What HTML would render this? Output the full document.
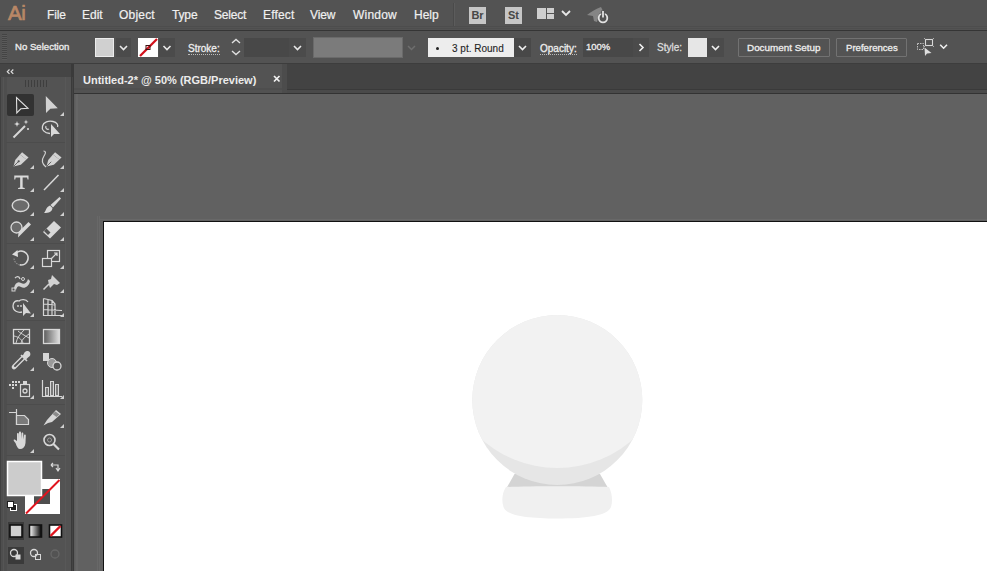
<!DOCTYPE html>
<html><head><meta charset="utf-8">
<style>
*{margin:0;padding:0;box-sizing:border-box}
html,body{width:987px;height:571px;overflow:hidden;background:#535353;font-family:"Liberation Sans",sans-serif;color:#f0f0f0}
.a{position:absolute}
.mi{position:absolute;top:8px;font-size:12px;line-height:14px;color:#f0f0f0;white-space:nowrap;-webkit-text-stroke:0.2px #f0f0f0}
.lbl{position:absolute;font-size:10px;line-height:12px;color:#eeeeee;white-space:nowrap;-webkit-text-stroke:0.3px currentColor}
svg{position:absolute;overflow:visible}
</style></head><body>
<!-- MENU BAR -->
<div class="a" style="left:0;top:0;width:987px;height:30px;background:#535353">
  <div class="a" style="left:8px;top:2px;font-size:20.5px;line-height:22px;color:#b98766;letter-spacing:-0.3px;-webkit-text-stroke:0.7px #b98766">Ai</div>
  <div class="mi" style="left:47px;letter-spacing:-0.15px">File</div>
  <div class="mi" style="left:82px;letter-spacing:0px">Edit</div>
  <div class="mi" style="left:119px;letter-spacing:0.2px">Object</div>
  <div class="mi" style="left:172px;letter-spacing:-0.15px">Type</div>
  <div class="mi" style="left:214px;letter-spacing:-0.2px">Select</div>
  <div class="mi" style="left:263px;letter-spacing:0.15px">Effect</div>
  <div class="mi" style="left:310px;letter-spacing:-0.15px">View</div>
  <div class="mi" style="left:353px;letter-spacing:0.2px">Window</div>
  <div class="mi" style="left:414px;letter-spacing:0px">Help</div>
  <div class="a" style="left:453px;top:3px;width:1px;height:23px;background:#4a4a4a"></div><div class="a" style="left:454px;top:3px;width:1px;height:23px;background:#5c5c5c"></div>
  <div class="a" style="left:469px;top:7px;width:17px;height:17px;background:#c6c6c6;color:#474747;font-size:11px;line-height:17px;text-align:center;font-weight:bold;-webkit-text-stroke:0">Br</div>
  <div class="a" style="left:505px;top:7px;width:17px;height:17px;background:#c6c6c6;color:#474747;font-size:11px;line-height:17px;text-align:center;font-weight:bold">St</div>
  <svg style="left:537px;top:8px" width="40" height="16">
    <rect x="0" y="0" width="9" height="11" fill="#cfcfcf"/>
    <rect x="10" y="0" width="7" height="5" fill="#cfcfcf"/>
    <rect x="10" y="6" width="7" height="5" fill="#cfcfcf"/>
    <path d="M25 3 L29 7 L33 3" stroke="#e8e8e8" stroke-width="1.8" fill="none"/>
  </svg>
  <svg style="left:585px;top:5px" width="26" height="20">
    <path d="M2 10 C6 7 10 4 16 2 L18 6 L14 9 L12 17 L9 16 L8 11 Z" fill="#858585"/>
    <circle cx="18" cy="13" r="4.3" stroke="#e2e2e2" stroke-width="1.8" fill="none"/>
    <rect x="16.2" y="5.5" width="3.6" height="7" fill="#535353"/>
    <rect x="17.1" y="6" width="1.8" height="6.5" fill="#e2e2e2"/>
  </svg>
</div>
<div class="a" style="left:0;top:26px;width:987px;height:1px;background:#4d4d4d"></div><div class="a" style="left:0;top:28px;width:987px;height:1px;background:#4e4e4e"></div><div class="a" style="left:0;top:30px;width:987px;height:1px;background:#353535"></div>
<!-- CONTROL BAR -->
<div class="a" style="left:0;top:31px;width:987px;height:32px;background:#535353">
  <div class="a" style="left:2px;top:3px;width:5px;height:26px;background:repeating-linear-gradient(#444 0 1px,#5a5a5a 1px 2px)"></div>
  <div class="lbl" style="left:15px;top:10px;font-size:9.6px;letter-spacing:0px">No Selection</div>
  <div class="a" style="left:95px;top:7px;width:19px;height:19px;background:#d0d0d0;border:1px solid #ececec"></div>
  <div class="a" style="left:116px;top:7px;width:15px;height:19px;background:#4b4b4b"></div>
  <svg style="left:116px;top:7px" width="15" height="19"><path d="M4 8 L7.5 11.5 L11 8" stroke="#e8e8e8" stroke-width="1.6" fill="none"/></svg>
  <svg style="left:138px;top:7px" width="20" height="19">
    <rect x="0" y="0" width="20" height="19" fill="#fff"/>
    <line x1="2" y1="18" x2="19" y2="1" stroke="#d3121c" stroke-width="2.3"/>
    <rect x="8" y="7.5" width="4" height="4" fill="none" stroke="#3a1010" stroke-width="1"/>
  </svg>
  <div class="a" style="left:159px;top:7px;width:16px;height:19px;background:#4b4b4b"></div>
  <svg style="left:159px;top:7px" width="16" height="19"><path d="M4.5 8 L8 11.5 L11.5 8" stroke="#e8e8e8" stroke-width="1.6" fill="none"/></svg>
  <div class="lbl" style="left:188px;top:12px;border-bottom:1px dotted #bbb;line-height:11px">Stroke:</div>
  <svg style="left:229px;top:6px" width="14" height="20">
    <path d="M3 6 L7 2.5 L11 6" stroke="#e0e0e0" stroke-width="1.4" fill="none"/>
    <path d="M3 14 L7 17.5 L11 14" stroke="#e0e0e0" stroke-width="1.4" fill="none"/>
  </svg>
  <div class="a" style="left:244px;top:7px;width:45px;height:19px;background:#484848"></div>
  <div class="a" style="left:289px;top:7px;width:17px;height:19px;background:#4b4b4b"></div>
  <svg style="left:289px;top:7px" width="17" height="19"><path d="M5 8 L8.5 11.5 L12 8" stroke="#e8e8e8" stroke-width="1.6" fill="none"/></svg>
  <div class="a" style="left:313px;top:6px;width:90px;height:21px;background:#7b7b7b;border:1px solid #6a6a6a"></div>
  <svg style="left:403px;top:7px" width="16" height="19"><path d="M5 8 L8.5 11.5 L12 8" stroke="#6e6e6e" stroke-width="1.5" fill="none"/></svg>
  <div class="a" style="left:428px;top:7px;width:86px;height:19px;background:#ededed"></div>
  <div class="a" style="left:436px;top:16px;width:2.5px;height:2.5px;background:#222;border-radius:2px"></div>
  <div class="lbl" style="left:452px;top:12px;color:#1e1e1e;-webkit-text-stroke:0.1px #1e1e1e">3 pt. Round</div>
  <div class="a" style="left:514px;top:7px;width:17px;height:19px;background:#484848"></div>
  <svg style="left:514px;top:7px" width="17" height="19"><path d="M5 8 L8.5 11.5 L12 8" stroke="#f0f0f0" stroke-width="1.6" fill="none"/></svg>
  <div class="lbl" style="left:540px;top:12px;border-bottom:1px dotted #bbb;line-height:11px">Opacity:</div>
  <div class="a" style="left:583px;top:7px;width:50px;height:19px;background:#484848"></div>
  <div class="lbl" style="left:586px;top:10px;font-size:9.5px">100%</div>
  <div class="a" style="left:633px;top:7px;width:16px;height:19px;background:#4b4b4b"></div>
  <svg style="left:633px;top:7px" width="16" height="19"><path d="M6.5 6 L10 9.5 L6.5 13" stroke="#f0f0f0" stroke-width="1.6" fill="none"/></svg>
  <div class="lbl" style="left:657px;top:11px;color:#dcdcdc">Style:</div>
  <div class="a" style="left:688px;top:7px;width:19px;height:19px;background:#e6e6e6"></div>
  <div class="a" style="left:707px;top:7px;width:17px;height:19px;background:#4b4b4b"></div>
  <svg style="left:707px;top:7px" width="17" height="19"><path d="M5 8 L8.5 11.5 L12 8" stroke="#f0f0f0" stroke-width="1.6" fill="none"/></svg>
  <div class="a" style="left:738px;top:7px;width:92px;height:19px;border:1px solid #727272;border-radius:1px"></div>
  <div class="lbl" style="left:747px;top:11px;font-size:9.9px">Document Setup</div>
  <div class="a" style="left:836px;top:7px;width:71px;height:19px;border:1px solid #727272;border-radius:1px"></div>
  <div class="lbl" style="left:846px;top:11px;font-size:9.6px">Preferences</div>
  <svg style="left:916px;top:7px" width="34" height="20">
    <rect x="9.5" y="1.5" width="7" height="6" fill="none" stroke="#d8d8d8" stroke-width="1.1"/>
    <path d="M8 0 L9.5 1.5 M18 0 L16.5 1.5 M8 9 L9.5 7.5 M18 9 L16.5 7.5" stroke="#b8b8b8" stroke-width="0.9"/>
    <rect x="1.5" y="5.5" width="6" height="6" fill="none" stroke="#c0c0c0" stroke-width="1" stroke-dasharray="1.5 1"/>
    <path d="M8.5 9.5 L9 18 L11 15.5 L15.5 15 Z" fill="#dedede"/>
    <path d="M24.2 6.8 L27.6 10.2 L31 6.8" stroke="#f0f0f0" stroke-width="1.6" fill="none"/>
  </svg>
</div>
<div class="a" style="left:0;top:63px;width:987px;height:1px;background:#3d3d3d"></div>
<!-- TOOLS PANEL -->
<div class="a" style="left:0;top:64px;width:73px;height:507px;background:#535353">
  <div class="a" style="left:0;top:0;width:71px;height:13px;background:#454545"></div>
  <svg style="left:6px;top:4px" width="10" height="8"><path d="M3.5 1.5 L1.3 3.7 L3.5 5.9 M7.3 1.5 L5.1 3.7 L7.3 5.9" stroke="#dcdcdc" stroke-width="1.2" fill="none"/></svg>
  <div class="a" style="left:25px;top:16px;width:22px;height:7px;background:repeating-linear-gradient(90deg,#3e3e3e 0 1px,transparent 1px 3px)"></div>
  <div class="a" style="left:65px;top:13px;width:1px;height:494px;background:#585858"></div><div class="a" style="left:0px;top:13px;width:1px;height:494px;background:#404040"></div><div class="a" style="left:1px;top:13px;width:6px;height:494px;background:#4e4e4e"></div><div class="a" style="left:3px;top:13px;width:1px;height:494px;background:#555"></div>
  <div class="a" style="left:71px;top:0px;width:3px;height:507px;background:#3a3a3a"></div><div class="a" style="left:72px;top:13px;width:1px;height:494px;background:#444"></div>
</div>
<svg style="left:0;top:0" width="73" height="571">
 <g fill="none" stroke="#4c4c4c" stroke-width="1">
  <line x1="6" y1="142.5" x2="65" y2="142.5"/>
  <line x1="6" y1="243.5" x2="65" y2="243.5"/>
  <line x1="6" y1="320.5" x2="65" y2="320.5"/>
  <line x1="6" y1="404.5" x2="65" y2="404.5"/>
  <line x1="6" y1="455.5" x2="65" y2="455.5"/>
 </g>
 <!-- flyouts -->
 <g fill="#cfcfcf">
  <path d="M64 112 L64 116 L60 116 Z"/>
  <path d="M34 165 L34 169 L30 169 Z"/><path d="M64 165 L64 169 L60 169 Z"/>
  <path d="M34 188 L34 192 L30 192 Z"/><path d="M64 188 L64 192 L60 192 Z"/>
  <path d="M34 212 L34 216 L30 216 Z"/><path d="M64 212 L64 216 L60 216 Z"/>
  <path d="M34 237 L34 241 L30 241 Z"/><path d="M64 237 L64 241 L60 241 Z"/>
  <path d="M34 265 L34 269 L30 269 Z"/><path d="M64 265 L64 269 L60 269 Z"/>
  <path d="M34 289 L34 293 L30 293 Z"/><path d="M64 289 L64 293 L60 293 Z"/>
  <path d="M34 313 L34 317 L30 317 Z"/><path d="M64 313 L64 317 L60 317 Z"/>
  <path d="M34 367 L34 371 L30 371 Z"/>
  <path d="M34 395 L34 399 L30 399 Z"/><path d="M64 395 L64 399 L60 399 Z"/>
  <path d="M64 424 L64 428 L60 428 Z"/>
  <path d="M34 449 L34 453 L30 453 Z"/>
 </g>
 <!-- selection -->
 <rect x="7" y="94" width="27" height="22" rx="2" fill="#323232"/>
 <path d="M16.5 97.5 L16.8 113 L20.8 108.8 L28 108.3 Z" fill="none" stroke="#e0e0e0" stroke-width="1.1" stroke-linejoin="miter"/>
 <!-- direct selection -->
 <path d="M45.8 96 L46 113 L50.3 108.8 L57.8 108.3 Z" fill="#d2d2d2"/>
 <!-- magic wand -->
 <line x1="13.5" y1="137.5" x2="25" y2="126" stroke="#d8d8d8" stroke-width="2"/>
 <g fill="#e0e0e0">
  <path d="M17 121 L17.7 123.3 L20 124 L17.7 124.7 L17 127 L16.3 124.7 L14 124 L16.3 123.3 Z"/>
  <path d="M26 119.5 L26.6 121.4 L28.5 122 L26.6 122.6 L26 124.5 L25.4 122.6 L23.5 122 L25.4 121.4 Z"/>
  <circle cx="28" cy="129" r="1"/>
 </g>
 <!-- lasso -->
 <path d="M50 133.5 C44 133 41.5 129.5 42.5 126 C43.5 122 48.5 120.5 53 121.5 C57 122.5 58.5 125 57.5 127" fill="none" stroke="#d8d8d8" stroke-width="1.3"/>
 <path d="M46 126 C45 128 47 130 49 129" fill="none" stroke="#d8d8d8" stroke-width="1.2"/>
 <path d="M51 124 L51 137 L54 134 L60 134 Z" fill="#d8d8d8"/>
 <!-- pen -->
 <g transform="translate(13.5 166.5) scale(0.86) translate(-13.5 -166.5)">
 <path d="M13.5 166.5 L15.5 159 L21 152.5 L28.5 158.5 L22 164.5 Z" fill="#d2d2d2"/>
 <path d="M21 152.5 L23.5 150 L31 156 L28.5 158.5 Z" fill="#d2d2d2"/>
 <line x1="13.8" y1="166.2" x2="19" y2="161" stroke="#535353" stroke-width="1"/>
 <circle cx="19.5" cy="160.5" r="1.3" fill="#535353"/>
 </g>
 <!-- curvature pen -->
 <g transform="translate(46.5 166.5) scale(0.86) translate(-46.5 -166.5)">
 <path d="M46.5 166.5 L48.5 159 L54 152.5 L61.5 158.5 L55 164.5 Z" fill="#d2d2d2"/>
 <path d="M54 152.5 L56.5 150 L64 156 L61.5 158.5 Z" fill="#d2d2d2"/>
 <line x1="46.8" y1="166.2" x2="52" y2="161" stroke="#535353" stroke-width="1"/>
 </g>
 <path d="M46 167 C41 163 42 159 44 156 C46 153 46 151 43.5 151" fill="none" stroke="#d2d2d2" stroke-width="1.2"/>
 <!-- type -->
 <g transform="translate(0.5 -1) scale(0.95 1) translate(1 0)"><path d="M13.5 176.5 L28.5 176.5 L28.5 180.5 L27.5 180.5 L27 178.5 L22.3 178.5 L22.3 188.5 L24.5 189 L24.5 190 L17.5 190 L17.5 189 L19.7 188.5 L19.7 178.5 L15 178.5 L14.5 180.5 L13.5 180.5 Z" fill="#dadada"/></g>
 <!-- line -->
 <line x1="44" y1="190" x2="58.5" y2="175" stroke="#d8d8d8" stroke-width="1.5"/>
 <!-- ellipse -->
 <ellipse cx="20.5" cy="205.5" rx="8.3" ry="6" fill="#6b6b6b" stroke="#d8d8d8" stroke-width="1.4"/>
 <!-- paintbrush -->
 <path d="M59.5 197 L61 198.5 L53 207.5 L50.5 205 Z" fill="#d8d8d8"/>
 <path d="M50 205.5 L52.5 208 C52 212 49 213 44 213 C46 211 46 207 50 205.5 Z" fill="#d8d8d8"/>
 <!-- shaper -->
 <circle cx="16.5" cy="227.5" r="5.5" fill="#6b6b6b" stroke="#d8d8d8" stroke-width="1.3"/>
 <path d="M28.5 222 L31 224.5 L21 234.5 L18 237.5 L18.5 232 Z" fill="#d8d8d8"/>
 <!-- eraser -->
 <path d="M54 221 L61 227.5 L50 238.5 L43 232 Z" fill="#d8d8d8"/>
 <path d="M46.5 228.5 L50.5 232.5 L48 235 L44 231 Z" fill="#535353"/>
 <!-- rotate -->
 <path d="M15.3 254 A7 7 0 1 1 19.8 264.9" fill="none" stroke="#d8d8d8" stroke-width="1.7"/>
 <path d="M19.8 264.9 A7 7 0 0 1 14 258" fill="none" stroke="#8c8c8c" stroke-width="1.2" stroke-dasharray="1.5 1"/>
 <path d="M12 254.5 L17.5 250 L18 257 Z" fill="#dcdcdc"/>
 <!-- scale -->
 <rect x="47.5" y="250.5" width="12" height="11" fill="none" stroke="#d8d8d8" stroke-width="1.2"/>
 <rect x="42.5" y="258.5" width="9" height="8" fill="#535353" stroke="#d8d8d8" stroke-width="1.2"/>
 <path d="M51 259 L57 253 M54 253 L57 253 L57 256" fill="none" stroke="#d8d8d8" stroke-width="1.2"/>
 <!-- warp -->
 <path d="M14 288 C15 283 18 281 21 283 C24 285 27 283 28 279 L30 281 C29 287 24 289 21 287 C18 285 17 287 16 290 Z" fill="#d2d2d2"/>
 <path d="M15 278 C17 276 19 276 20 279" fill="none" stroke="#d2d2d2" stroke-width="1.3"/>
 <circle cx="23" cy="279" r="1.5" fill="none" stroke="#d2d2d2" stroke-width="1"/>
 <rect x="12" y="288" width="3" height="3" fill="none" stroke="#d2d2d2" stroke-width="1"/>
 <!-- puppet warp -->
 <path d="M52 275 L60 283 L57 285 L54 284 L50 288 L49 285 L48 280 L51 279 Z" fill="#d2d2d2"/>
 <line x1="49" y1="284" x2="43.5" y2="289.5" stroke="#d2d2d2" stroke-width="1.6"/>
 <!-- free transform -->
 <path d="M22 312 C18 313 13 311 13 306 C13 302 16 300 19 301 C21 299 26 299 28 302" fill="none" stroke="#d6d6d6" stroke-width="1.3"/>
 <g fill="#d6d6d6"><circle cx="18" cy="306" r="0.9"/><circle cx="21" cy="306" r="0.9"/><circle cx="24" cy="306" r="0.9"/></g>
 <path d="M23 303 L23 316 L26 313 L31 313.5 Z" fill="#d6d6d6"/>
 <!-- perspective grid -->
 <path d="M43.5 298.5 L43.5 315.5 L63 315.5 M43.5 298.5 L52 300.5 L52 315.5 M43.5 304 L55 305 M43.5 309.5 L62 310.5 M48 299.5 L48 315.5 M52 300.5 L55 304 L55 315.5" fill="none" stroke="#d6d6d6" stroke-width="1.2"/>
 <!-- mesh -->
 <rect x="13.5" y="329.5" width="16" height="14" fill="none" stroke="#d8d8d8" stroke-width="1.3"/>
 <path d="M16 343 C17 338 20 334 24 330 M21 343 C22 339 26 336 29 334 M14 336 C18 337 21 338 23 343 M18 331 C20 333 24 335 29 338" fill="none" stroke="#d0d0d0" stroke-width="1"/>
 <!-- gradient -->
 <defs><linearGradient id="gr" x1="0" x2="1"><stop offset="0" stop-color="#5a5a5a"/><stop offset="1" stop-color="#e0e0e0"/></linearGradient>
 <linearGradient id="gr2" x1="0" x2="1"><stop offset="0" stop-color="#ffffff"/><stop offset="1" stop-color="#000000"/></linearGradient></defs>
 <rect x="43.5" y="329.5" width="16" height="14" fill="url(#gr)" stroke="#d8d8d8" stroke-width="1.3"/>
 <!-- eyedropper -->
 <line x1="23.5" y1="357.5" x2="14" y2="367" stroke="#d6d6d6" stroke-width="4.6" stroke-linecap="round"/>
 <line x1="23" y1="358" x2="15" y2="366" stroke="#535353" stroke-width="2" stroke-linecap="round"/>
 <path d="M24.5 352.5 C26 350.5 29 350.5 30 352.5 C31 354.5 30 356.5 28 357.5 L26 359.5 L22.5 356 Z" fill="#d6d6d6"/>
 <line x1="21" y1="355" x2="27" y2="361" stroke="#d6d6d6" stroke-width="1.6"/>
 <!-- blend -->
 <rect x="43" y="353" width="6" height="8" fill="#d6d6d6"/>
 <circle cx="52" cy="363" r="4.5" fill="#9a9a9a" stroke="#d6d6d6" stroke-width="1"/>
 <circle cx="57" cy="366" r="4" fill="#535353" stroke="#d6d6d6" stroke-width="1.3"/>
 <!-- symbol sprayer -->
 <g fill="#d6d6d6">
  <rect x="12" y="381" width="2" height="2"/><rect x="15" y="381" width="2" height="2"/><rect x="18" y="381" width="2" height="2"/>
  <rect x="9" y="384" width="2" height="2"/><rect x="12" y="384" width="2" height="2"/><rect x="15" y="384" width="2" height="2"/>
  <rect x="12" y="387" width="2" height="2"/>
 </g>
 <rect x="20.5" y="384.5" width="9" height="12" fill="none" stroke="#d6d6d6" stroke-width="1.2"/>
 <rect x="23" y="381" width="4" height="3" fill="#d6d6d6"/>
 <circle cx="25" cy="391" r="2" fill="none" stroke="#d6d6d6" stroke-width="1.3"/>
 <!-- graph -->
 <path d="M42.5 380 L42.5 396.5 L62 396.5" fill="none" stroke="#d6d6d6" stroke-width="1.2"/>
 <rect x="45.5" y="387.5" width="3" height="8" fill="#7a7a7a" stroke="#d6d6d6" stroke-width="1"/>
 <rect x="50.5" y="381.5" width="3" height="14" fill="#7a7a7a" stroke="#d6d6d6" stroke-width="1"/>
 <rect x="55.5" y="384.5" width="3" height="11" fill="#7a7a7a" stroke="#d6d6d6" stroke-width="1"/>
 <!-- artboard -->
 <path d="M9 412.5 L16 412.5 M16.5 409 L16.5 425" fill="none" stroke="#d6d6d6" stroke-width="1.2"/>
 <path d="M16.5 415.5 L24.5 415.5 L28.5 419.5 L28.5 424.5 L16.5 424.5 Z" fill="#7a7a7a" stroke="#d6d6d6" stroke-width="1.2"/>
 <!-- slice -->
 <path d="M56 410 L61 414 L52 422 L48 423 L43.5 425.5 L47 420 Z" fill="#d6d6d6"/>
 <path d="M55.5 411.5 L59.5 414.5 L56.5 417 L52.5 414 Z" fill="#8a8a8a"/>
 <!-- hand -->
 <path d="M15.5 443 C14 441 13 440 14 439.5 C15 439 16.5 440.5 17 441 L17 434 C17 432.5 18.8 432.5 18.8 434 L18.8 439 L19 432.5 C19 431 21 431 21 432.5 L21 439 L21.5 433.5 C21.5 432 23.3 432 23.3 433.5 L23.3 439.5 L24 435.5 C24 434 25.8 434 25.8 435.5 L25.5 443 C25 447 23 449 20 449 C18 449 17 447 15.5 443 Z" fill="#d8d8d8"/>
 <!-- zoom -->
 <circle cx="49.5" cy="440" r="5.5" fill="none" stroke="#d8d8d8" stroke-width="1.6"/>
 <circle cx="49.5" cy="440" r="2" fill="none" stroke="#9a9a9a" stroke-width="1"/>
 <line x1="53.5" y1="444" x2="59" y2="449.5" stroke="#d8d8d8" stroke-width="2.2"/>
 <!-- swap arrows -->
 <path d="M51 465 L53 463 M51 465 L53 467 M51 465 L58 465 L58 470 M56 468 L58 471 L60 468" fill="none" stroke="#d8d8d8" stroke-width="1.2"/>
 <!-- stroke swatch -->
 <rect x="25" y="479" width="35" height="35" fill="#ffffff"/>
 <rect x="34" y="489" width="16" height="15" fill="#4e4e4e"/>
 <line x1="26" y1="513.5" x2="59.5" y2="480" stroke="#e0141e" stroke-width="2"/>
 <!-- fill swatch -->
 <rect x="7.5" y="461.5" width="34" height="34" fill="#cccccc" stroke="#ffffff" stroke-width="1.5"/>
 <!-- default -->
 <rect x="10.5" y="504.5" width="6" height="6" fill="#1e1e1e" stroke="#ffffff" stroke-width="1"/>
 <rect x="7.5" y="501.5" width="6" height="6" fill="#ffffff" stroke="#1e1e1e" stroke-width="1"/>
 <!-- mode buttons -->
 <rect x="8" y="522" width="16" height="18" fill="#3a3a3a"/>
 <rect x="10" y="525" width="12" height="12" fill="#cfcfcf" stroke="#111" stroke-width="1.6"/>
 <rect x="29.5" y="525" width="12" height="12" fill="url(#gr2)" stroke="#111" stroke-width="1.6"/>
 <rect x="49.5" y="525" width="12" height="12" fill="#ffffff" stroke="#111" stroke-width="1.6"/>
 <line x1="50.5" y1="536" x2="60.5" y2="526" stroke="#e0141e" stroke-width="2.4"/>
 <!-- draw modes -->
 <rect x="8" y="547" width="16" height="17" fill="#3a3a3a"/>
 <circle cx="14" cy="553" r="3.5" fill="none" stroke="#d8d8d8" stroke-width="1.3"/>
 <rect x="15.5" y="554.5" width="5" height="5" fill="#d8d8d8"/>
 <circle cx="34" cy="553" r="3.5" fill="none" stroke="#d8d8d8" stroke-width="1.3"/>
 <rect x="35.5" y="554.5" width="5" height="5" fill="none" stroke="#d8d8d8" stroke-width="1"/>
 <circle cx="55" cy="554" r="4" fill="none" stroke="#676767" stroke-width="1.3"/>
</svg>

<!-- TAB BAR -->
<div class="a" style="left:74px;top:64px;width:913px;height:30px;background:#434343">
  <div class="a" style="left:0;top:25px;width:913px;height:1px;background:#3a3a3a"></div>
  <div class="a" style="left:0;top:26px;width:913px;height:3px;background:#4a4a4a"></div>
  <div class="a" style="left:0;top:29px;width:913px;height:1px;background:#333333"></div>
  <div class="a" style="left:0;top:0;width:208px;height:24px;background:#535353"></div>
  <div class="a" style="left:0;top:24px;width:208px;height:2px;background:#4e4e4e"></div>
  <div class="a" style="left:0;top:26px;width:208px;height:3px;background:#525252"></div>
  <div class="a" style="left:208px;top:0;width:5px;height:29px;background:#4c4c4c"></div>
  <div class="lbl" style="left:9px;top:10px;font-weight:bold;font-size:11px;line-height:13px;color:#ececec;-webkit-text-stroke:0">Untitled-2* @ 50% (RGB/Preview)</div>
  <svg style="left:199px;top:11px" width="8" height="8"><path d="M1 1 L6.5 6.5 M6.5 1 L1 6.5" stroke="#f2f2f2" stroke-width="1.7"/></svg>
</div>
<!-- PASTEBOARD -->
<div class="a" style="left:74px;top:94px;width:913px;height:477px;background:#616161">
  <div class="a" style="left:0px;top:0;width:1px;height:477px;background:#5c5c5c"></div>
  <div class="a" style="left:2px;top:0;width:2px;height:477px;background:#666666"></div>
  <div class="a" style="left:23px;top:122px;width:1px;height:355px;background:#686868"></div><div class="a" style="left:25px;top:122px;width:1px;height:355px;background:#686868"></div><div class="a" style="left:26px;top:125px;width:887px;height:1px;background:#686868"></div>
</div>
<!-- ARTBOARD -->
<div class="a" style="left:103px;top:221px;width:884px;height:350px;background:#fff;border-top:1px solid #111;border-left:1px solid #111"></div>
<svg style="left:0;top:0" width="987" height="571">
  <defs>
    <clipPath id="ball"><circle cx="557.3" cy="400" r="85"/></clipPath>
  </defs>
  <path d="M514.5 474 L600 474 L608 488 L506.5 488 Z" fill="#d4d4d4"/>
  <circle cx="557.3" cy="400" r="85" fill="#e6e6e6"/>
  <circle cx="557.3" cy="353.6" r="114.4" fill="#f2f2f2" clip-path="url(#ball)"/>
  <path d="M506 487 C530 486 584 486 609 487 C612 493 613 501 611 507 C608 515 590 518.5 557 518.5 C524 518.5 506 515 503.5 507 C501.5 501 502 493 506 487 Z" fill="#f0f0f0"/>
</svg>
</body></html>
